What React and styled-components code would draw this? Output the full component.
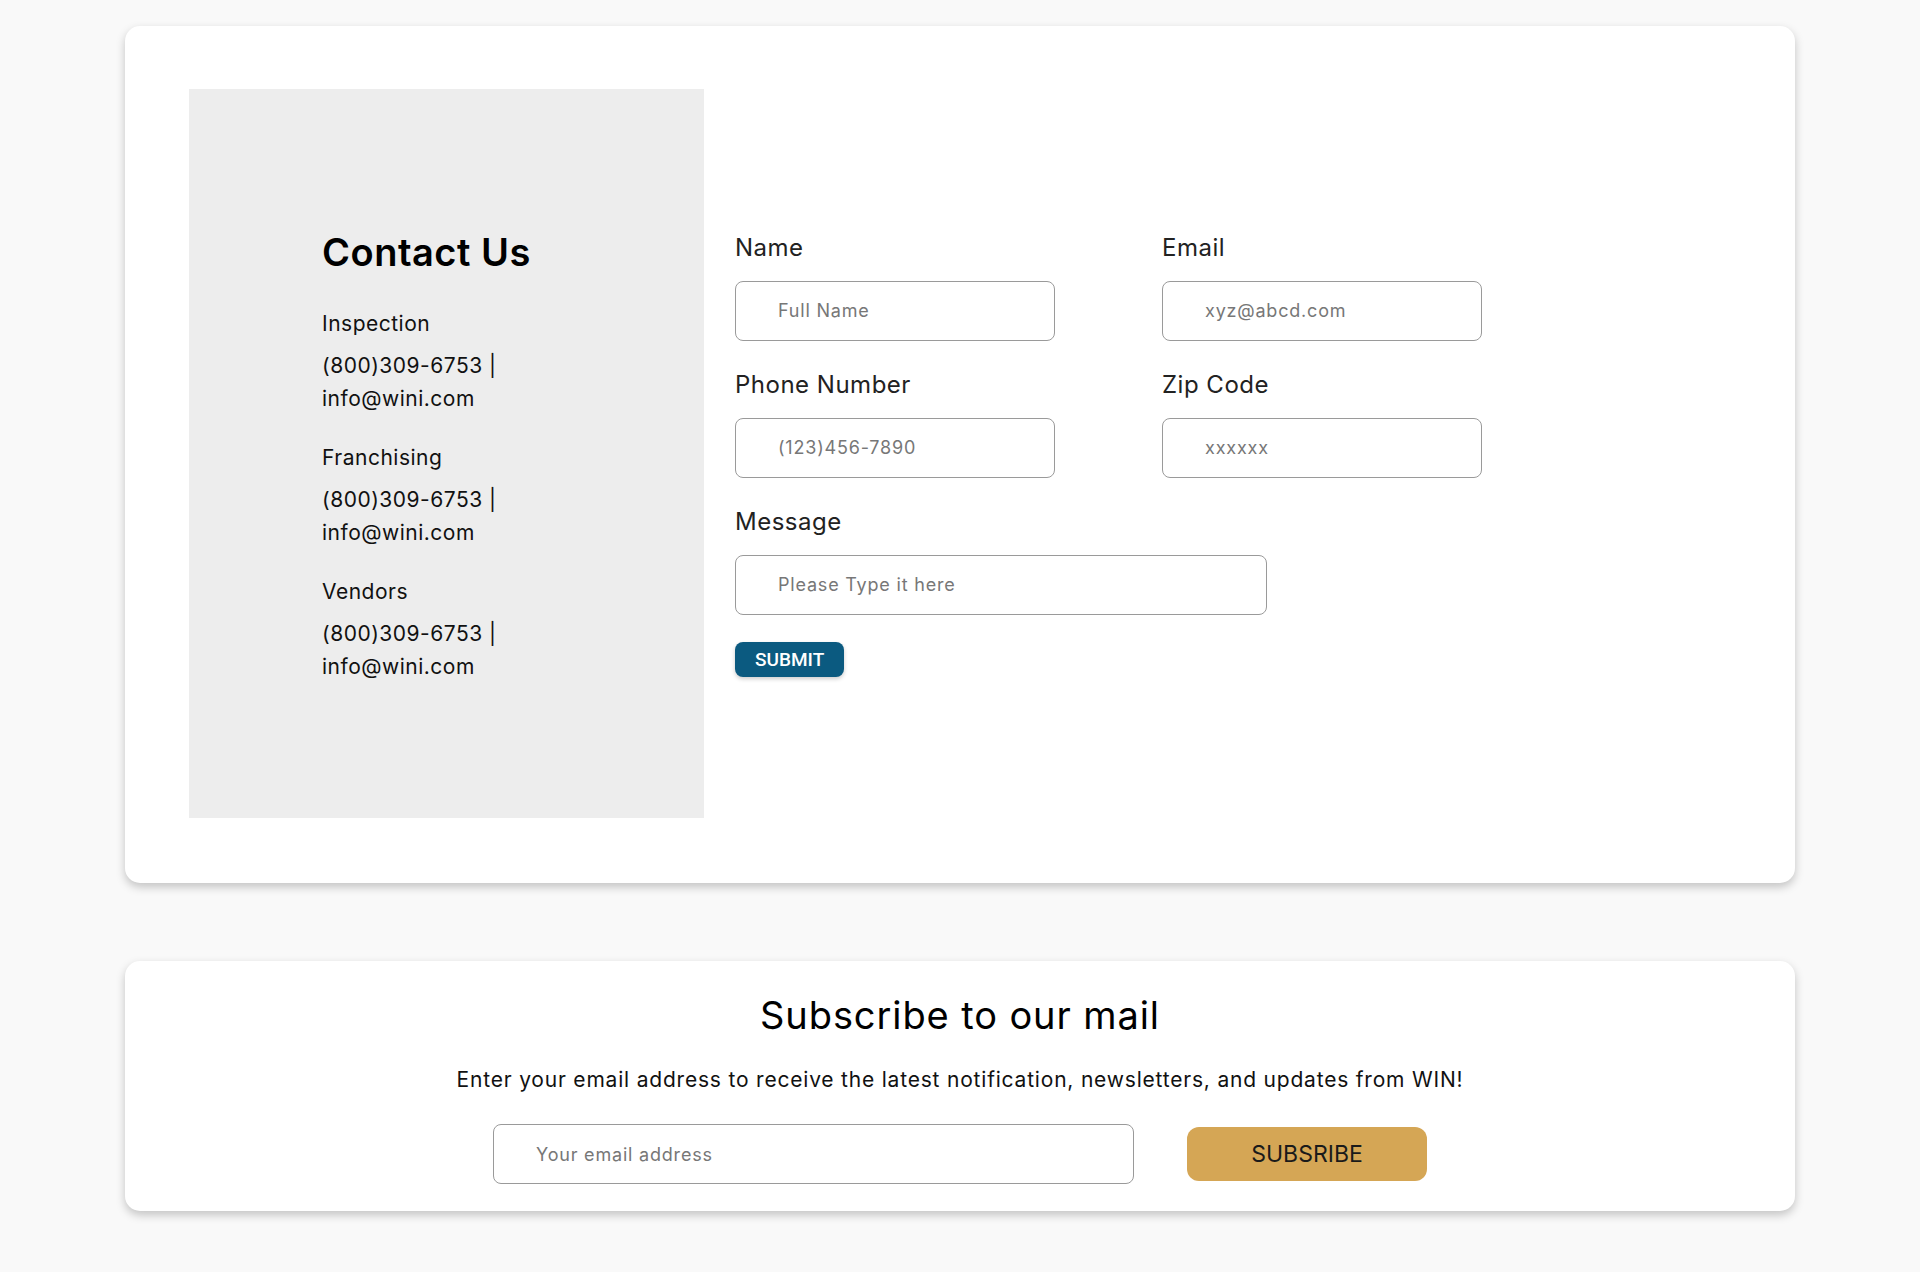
import React from "react";
import styled, { createGlobalStyle } from "styled-components";

const GlobalStyle = createGlobalStyle`
    * {
        box-sizing: border-box;
    }
    body {
        margin: 0;
        background: #f9f9f9;
        font-family: Inter, "Noto Sans", sans-serif;
        color: #111;
    }
`;

const Page = styled.div`
    display: flex;
    flex-direction: column;
    gap: 78px;
    padding: 26px 125px 61px;
`;

const Card = styled.section`
    background: #fff;
    border-radius: 15px;
    box-shadow: 0 4px 10px rgba(0, 0, 0, 0.22);
`;

const ContactCard = styled(Card)`
    display: flex;
    padding: 63px 64px 65px;
`;

const InfoPanel = styled.div`
    width: 515px;
    height: 729px;
    background: #ededed;
    display: flex;
    flex-direction: column;
    justify-content: center;
    padding-left: 133px;
`;

const Heading = styled.h2`
    margin: 0 0 30px;
    font-size: 38px;
    line-height: 54px;
    font-weight: 600;
    letter-spacing: 0.5px;
    color: #000;
`;

const InfoGroup = styled.div`
    font-size: 21px;
    letter-spacing: 0.5px;
    & + & {
        margin-top: 28px;
    }
    .info-title {
        line-height: 30px;
        margin-bottom: 10px;
    }
    .info-line {
        line-height: 33px;
    }
`;

const FormWrap = styled.form`
    margin-left: 31px;
    display: flex;
    flex-direction: column;
    justify-content: center;
`;

const FieldGrid = styled.div`
    display: grid;
    grid-template-columns: 320px 320px;
    column-gap: 107px;
    row-gap: 27px;
`;

const Field = styled.label`
    display: flex;
    flex-direction: column;
    grid-column: ${(props) => (props.wide ? "1 / span 2" : "auto")};
    span {
        font-size: 24px;
        line-height: 33px;
        letter-spacing: 0.5px;
        margin-bottom: 17px;
        color: #222;
    }
`;

const Input = styled.input`
    width: ${(props) => props.width || "100%"};
    height: 60px;
    border: 1px solid #9a9a9a;
    border-radius: 8px;
    padding: 0 42px;
    font-family: inherit;
    font-size: 18px;
    letter-spacing: 0.8px;
    color: #333;
    outline: none;
    &::placeholder {
        color: #777;
    }
`;

const SubmitButton = styled.button`
    align-self: flex-start;
    margin-top: 27px;
    height: 35px;
    padding: 0 20px;
    border: none;
    border-radius: 8px;
    background: #0b5a80;
    color: #fff;
    font-family: Roboto, sans-serif;
    font-weight: 500;
    font-size: 19px;
    box-shadow: 0 2px 4px rgba(0, 0, 0, 0.2);
`;

const SubscribeCard = styled(Card)`
    padding: 27px 0;
    display: flex;
    flex-direction: column;
    align-items: center;
    .sub-title {
        margin: 0;
        font-size: 38px;
        line-height: 54px;
        font-weight: 400;
        letter-spacing: 0.9px;
        color: #000;
    }
    .sub-desc {
        margin: 23px 0 29px;
        font-size: 21px;
        line-height: 30px;
        letter-spacing: 0.8px;
    }
`;

const SubscribeRow = styled.div`
    display: flex;
    align-items: center;
    gap: 53px;
`;

const SubscribeButton = styled.button`
    width: 240px;
    height: 54px;
    border: none;
    border-radius: 12px;
    background: #d5a655;
    color: #1a1a1a;
    font-family: inherit;
    font-size: 23px;
    text-transform: uppercase;
`;

const contacts = ["Inspection", "Franchising", "Vendors"];

const App = () => {
    return (
        <>
            <GlobalStyle />
            <Page>
                <ContactCard>
                    <InfoPanel>
                        <Heading>Contact Us</Heading>
                        {contacts.map((title) => (
                            <InfoGroup key={title}>
                                <div className="info-title">{title}</div>
                                <div className="info-line">(800)309-6753 |</div>
                                <div className="info-line">info@wini.com</div>
                            </InfoGroup>
                        ))}
                    </InfoPanel>
                    <FormWrap onSubmit={(e) => e.preventDefault()}>
                        <FieldGrid>
                            <Field>
                                <span>Name</span>
                                <Input placeholder="Full Name" />
                            </Field>
                            <Field>
                                <span>Email</span>
                                <Input placeholder="xyz@abcd.com" />
                            </Field>
                            <Field>
                                <span>Phone Number</span>
                                <Input placeholder="(123)456-7890" />
                            </Field>
                            <Field>
                                <span>Zip Code</span>
                                <Input placeholder="xxxxxx" />
                            </Field>
                            <Field wide>
                                <span>Message</span>
                                <Input width="532px" placeholder="Please Type it here" />
                            </Field>
                        </FieldGrid>
                        <SubmitButton type="submit">SUBMIT</SubmitButton>
                    </FormWrap>
                </ContactCard>
                <SubscribeCard>
                    <h2 className="sub-title">Subscribe to our mail</h2>
                    <p className="sub-desc">
                        Enter your email address to receive the latest notification,
                        newsletters, and updates from WIN!
                    </p>
                    <SubscribeRow>
                        <Input width="641px" placeholder="Your email address" />
                        <SubscribeButton>Subsribe</SubscribeButton>
                    </SubscribeRow>
                </SubscribeCard>
            </Page>
        </>
    );
};

export default App;
